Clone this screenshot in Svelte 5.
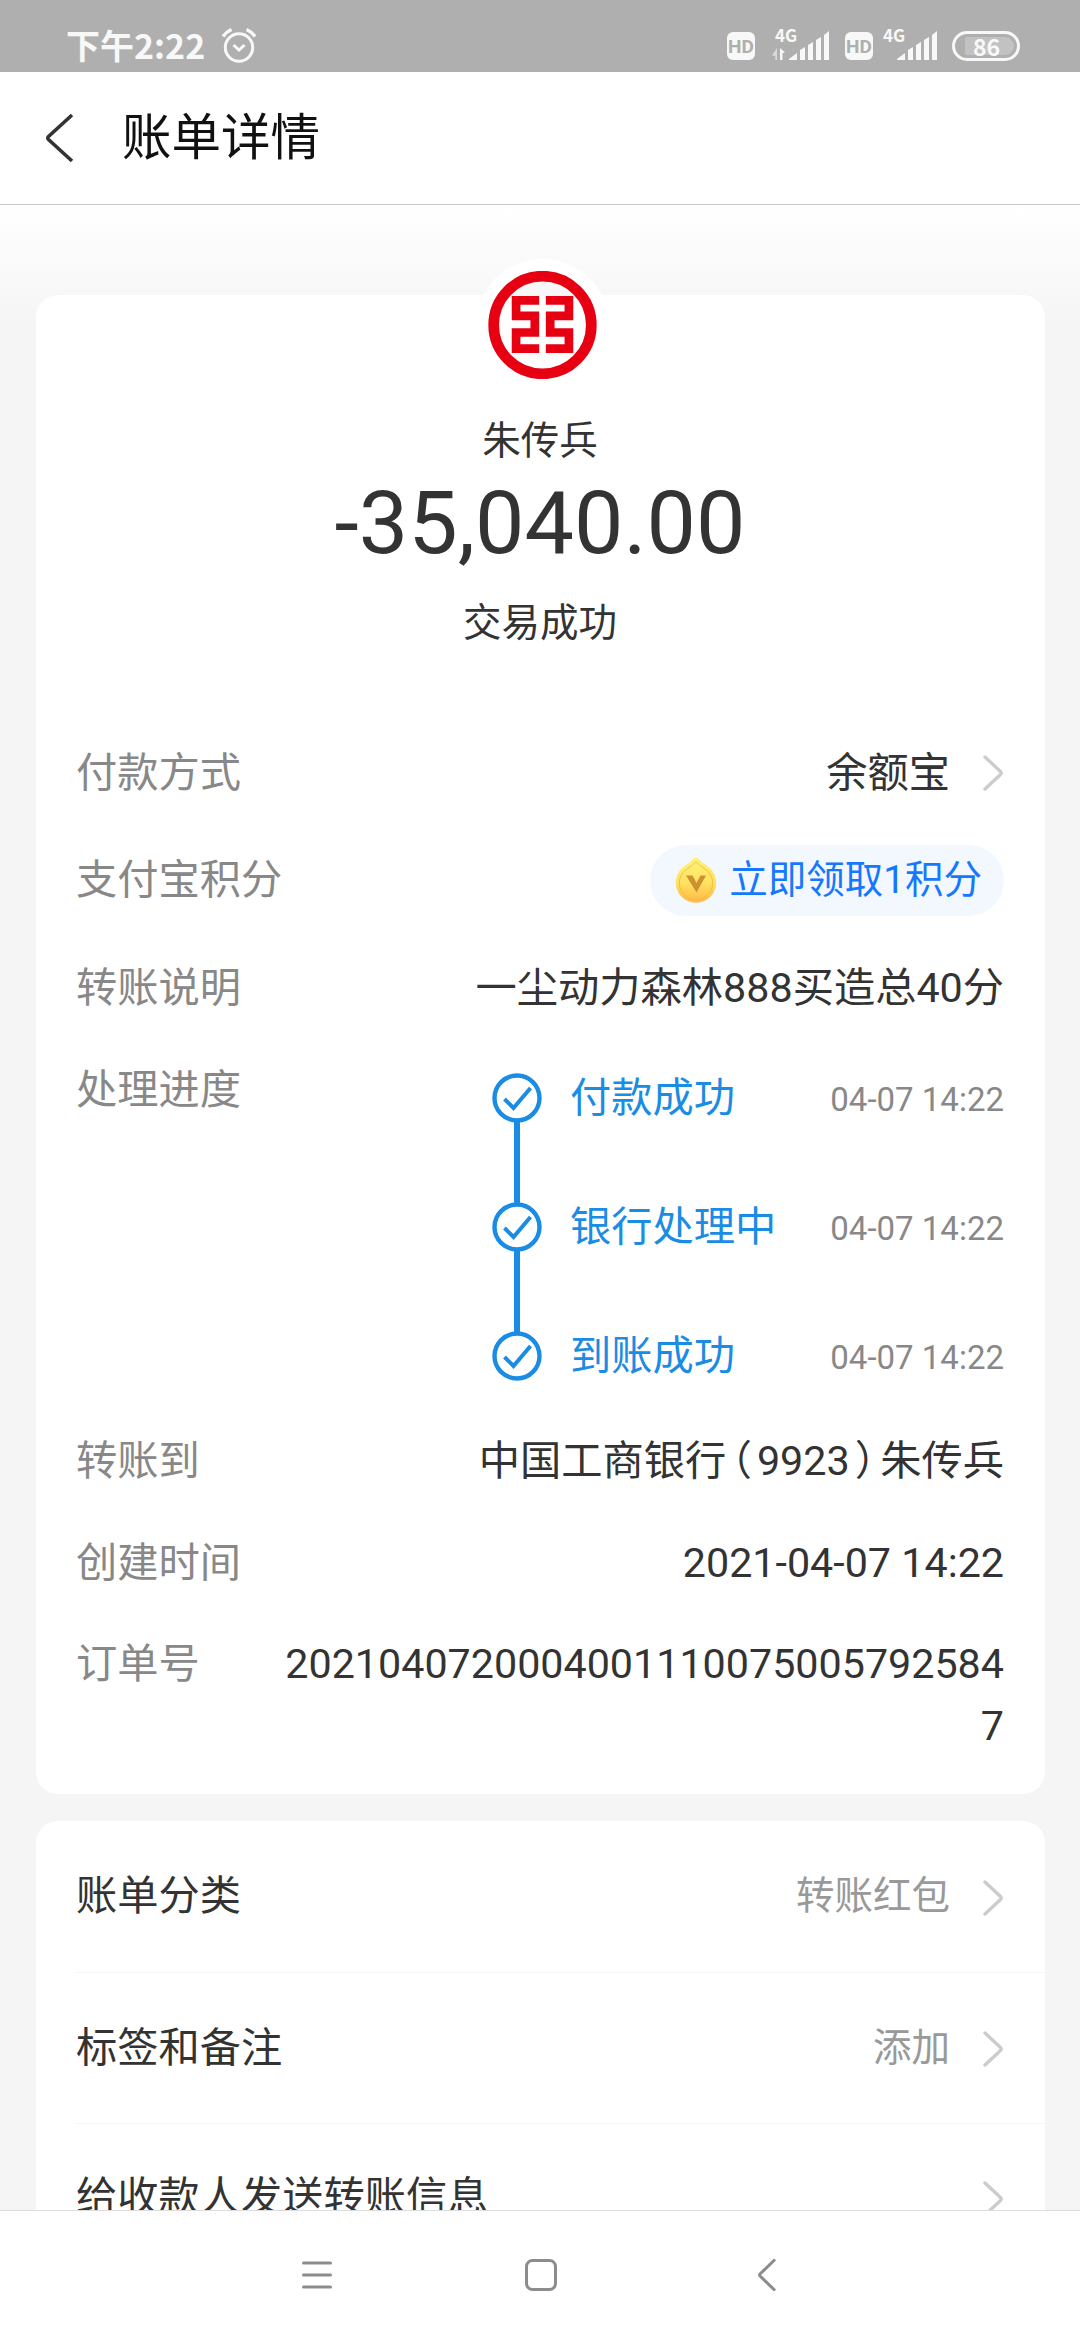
<script lang="ts">
  const steps = [
    { label: '付款成功', time: '04-07 14:22' },
    { label: '银行处理中', time: '04-07 14:22' },
    { label: '到账成功', time: '04-07 14:22' }
  ];

  const options = [
    { label: '账单分类', value: '转账红包' },
    { label: '标签和备注', value: '添加' },
    { label: '给收款人发送转账信息', value: '' }
  ];

  // signal bars, left to right
  const bars = [
    { x: 0, d: 'M0 29v-1l8-6v7z' },
    { x: 11, d: 'M0 29v-10l5-3v13z' },
    { x: 19, d: 'M0 29v-15l5-3v18z' },
    { x: 27, d: 'M0 29v-20l5-3v23z' },
    { x: 35, d: 'M0 29v-25l5-4v29z' }
  ];
</script>

{#snippet arrow()}
  <svg class="arrow" width="22" height="38" viewBox="0 0 22 38" fill="none" stroke="#ccc" stroke-width="3.4" stroke-linecap="round" stroke-linejoin="round">
    <path d="M3 3l15.5 14.6q1.4 1.4 0 2.8L3 35"></path>
  </svg>
{/snippet}

{#snippet signal(data: boolean)}
  <div class="signal">
    <span class="net">4G</span>
    <svg width="58" height="30" viewBox="0 0 58 30" fill="#f8f8f8">
      {#if data}
        <path d="M5 17v12H3.4v-4L0 24.5z" opacity=".6"></path>
        <path d="M8 17l5 4.500-2.500.5v7H8z"></path>
      {/if}
      {#each bars as bar}
        <path d={bar.d} transform="translate({bar.x + 17} 0)"></path>
      {/each}
    </svg>
  </div>
{/snippet}

<div class="screen">
  <div class="status-bar">
    <span class="clock">下午2:22</span>
    <svg class="alarm" width="36" height="36" viewBox="0 0 36 36" fill="none" stroke="#f8f8f8" stroke-width="3">
      <circle cx="18" cy="19.5" r="13.7"></circle>
      <path d="M2 8.5Q5 4 10.500 1.500M34 8.500Q31 4 25.500 1.500" stroke-width="3.400"></path>
      <path d="M12.500 17l5.500 5 5.500-5"></path>
    </svg>
    <div class="status-right">
      <span class="hd">HD</span>
      {@render signal(true)}
      <span class="hd second">HD</span>
      {@render signal(false)}
      <span class="battery"><span>86</span></span>
    </div>
  </div>

  <header class="header">
    <svg width="30" height="50" viewBox="0 0 30 50" fill="none" stroke="#333" stroke-width="3.6">
      <path d="M28 2L4.500 23.500q-1.500 1.500 0 3L28 48"></path>
    </svg>
    <h1>账单详情</h1>
  </header>

  <main class="content">
    <section class="card detail">
      <div class="logo">
        <svg width="109" height="108" viewBox="0 0 326 323" fill="none" stroke="#e60012">
          <circle cx="163" cy="161.500" r="146" stroke-width="32"></circle>
          <path stroke-width="26" d="M153 88H84v46h56v50H84v48h69M173 88h69v46h-56v50h56v48h-69"></path>
        </svg>
      </div>

      <div class="payee">朱传兵</div>
      <div class="amount">-35,040.00</div>
      <div class="state">交易成功</div>

      <div class="row tall first">
        <span class="label">付款方式</span>
        <span class="value">余额宝</span>
        {@render arrow()}
      </div>
      <div class="row tall">
        <span class="label">支付宝积分</span>
        <button class="points">
          <svg width="42" height="46" viewBox="0 0 42 46">
            <defs>
              <linearGradient id="coin" x1="0" y1="0" x2="0" y2="1">
                <stop offset="0" stop-color="#fff27a"></stop>
                <stop offset=".55" stop-color="#ffe260"></stop>
                <stop offset="1" stop-color="#fdb945"></stop>
              </linearGradient>
            </defs>
            <path d="M21 .5q2 0 3.500 2 2.500 3.500 8 6.500A20.200 20.200 0 1 1 9.500 9q5.500-3 8-6.500Q19 .5 21 .5z" fill="url(#coin)"></path>
            <path d="M21 4.500q3.500 4.500 9 7.500A16.700 16.700 0 1 1 12 12q5.500-3 9-7.500z" fill="none" stroke="#efb83c" stroke-width=".8"></path>
            <path d="M11 18.500h6.500l4 7.500 4-7.500H31L21.500 35.500z" fill="#cc9230"></path>
          </svg>
          立即领取1积分
        </button>
      </div>
      <div class="row tall">
        <span class="label">转账说明</span>
        <span class="value">一尘动力森林888买造总40分</span>
      </div>

      <div class="row progress">
        <span class="label">处理进度</span>
        <ol class="steps">
          {#each steps as step}
            <li>
              <svg width="50" height="50" viewBox="0 0 50 50" fill="none" stroke="#1b8ce3" stroke-width="4.4">
                <circle cx="25" cy="25" r="22.5"></circle>
                <path d="M12.500 26l9 9L38.500 15" stroke-width="4"></path>
              </svg>
              <span class="step-label">{step.label}</span>
              <time>{step.time}</time>
            </li>
          {/each}
        </ol>
      </div>

      <div class="row">
        <span class="label">转账到</span>
        <span class="value">中国工商银行<span class="paren">（</span>9923<span class="paren">）</span>朱传兵</span>
      </div>
      <div class="row">
        <span class="label">创建时间</span>
        <span class="value">2021-04-07 14:22</span>
      </div>
      <div class="row">
        <span class="label">订单号</span>
        <span class="value order">20210407200040011100750057925847</span>
      </div>
    </section>

    <section class="card options">
      {#each options as option}
        <div class="option">
          <span>{option.label}</span>
          <span class="option-value">{option.value}</span>
          {@render arrow()}
        </div>
      {/each}
    </section>
  </main>

  <nav class="nav">
    <svg width="32" height="34" viewBox="0 0 32 34" stroke="#8c8c8c" stroke-width="3" stroke-linecap="round">
      <path d="M2.500 5h27M2.500 17h27M2.500 29h27"></path>
    </svg>
    <svg width="34" height="34" viewBox="0 0 34 34" fill="none" stroke="#8c8c8c" stroke-width="3">
      <rect x="2.5" y="2.5" width="29" height="29" rx="6"></rect>
    </svg>
    <svg width="20" height="34" viewBox="0 0 20 34" fill="none" stroke="#8c8c8c" stroke-width="3">
      <path d="M18 1.500L3 16q-1 1 0 2l15 14.500"></path>
    </svg>
  </nav>
</div>

<style>
  :global(body) {
    margin: 0;
    background: #f5f5f5;
  }

  .screen {
    display: flex;
    flex-direction: column;
    width: 1080px;
    height: 2340px;
    overflow: hidden;
    font-family: Roboto, 'Noto Sans CJK SC', sans-serif;
    font-size: 41.25px;
    line-height: 62px;
    color: #333;
    background: #f5f5f5;
  }

  svg {
    display: block;
    flex: none;
  }

  .status-bar {
    flex: none;
    display: flex;
    box-sizing: border-box;
    height: 72px;
    padding: 0 60px 0 66px;
    color: #f8f8f8;
    background: #afafaf;
  }

  .clock {
    width: 155px;
    margin-top: 22px;
    font: 700 34px/46px 'Noto Sans CJK SC', sans-serif;
    white-space: nowrap;
  }

  .alarm {
    margin-top: 28px;
  }

  .status-right {
    display: flex;
    align-items: flex-start;
    margin-left: auto;
    padding-top: 31px;
  }

  .hd {
    width: 28px;
    height: 28px;
    margin-top: 1px;
    border-radius: 6px;
    background: #f8f8f8;
    color: #afafaf;
    font: 700 19px/29px Roboto, sans-serif;
    text-align: center;
  }

  .hd.second {
    margin-left: 15px;
  }

  .signal {
    position: relative;
    margin-left: 17px;
  }

  .second + .signal {
    margin-left: 7px;
  }

  .net {
    position: absolute;
    left: 3px;
    top: -6px;
    font: 700 17px/20px 'Noto Sans CJK SC', sans-serif;
  }

  .battery {
    box-sizing: border-box;
    width: 68px;
    height: 30px;
    margin-left: 14px;
    padding: 3px 4px 3px 10px;
    border: 3px solid #f8f8f8;
    border-radius: 15px;
  }

  .battery span {
    display: block;
    width: 49px;
    height: 18px;
    border-radius: 2px 9px 9px 2px;
    background: #c2c2c2;
    font: 700 23px/18px 'Noto Sans CJK SC', sans-serif;
    text-align: center;
    text-indent: -6px;
  }

  .header {
    flex: none;
    display: flex;
    align-items: center;
    height: 132px;
    padding-left: 44px;
    border-bottom: 1px solid #c8c8c8;
    background: #fff;
  }

  h1 {
    margin: 0 0 0 48px;
    font-size: 49.5px;
    font-weight: 400;
    color: #111;
  }

  .content {
    flex: 1;
    min-height: 0;
    overflow: hidden;
    padding: 90px 35px 0 36px;
    background: linear-gradient(#fff, #f5f5f5 120px);
  }

  .card {
    border-radius: 22px;
    background: #fff;
  }

  .detail {
    position: relative;
    box-sizing: border-box;
    height: 1498.5px;
    padding: 117px 41px 0 40px;
  }

  .logo {
    position: absolute;
    top: -36px;
    left: 50%;
    margin-left: -65px;
    border: 12px solid #fff;
    border-radius: 50%;
    background: linear-gradient(#f7f7f7 25px, #fff 25px);
  }

  .payee,
  .state {
    font-size: 38.5px;
    line-height: 58px;
    text-align: center;
  }

  .amount {
    font-size: 88px;
    line-height: 106px;
    text-align: center;
  }

  .state {
    margin-top: 18px;
  }

  .row {
    display: flex;
    padding: 20px 0 19.5px;
  }

  .row.tall {
    align-items: center;
    height: 107.6px;
    padding: 0;
  }

  .row.first {
    margin-top: 67px;
  }

  .label {
    flex: none;
    color: #888;
  }

  .value {
    margin-left: auto;
    text-align: right;
  }

  .arrow {
    margin-left: 32px;
  }

  .points {
    display: flex;
    align-items: center;
    height: 71px;
    margin-left: auto;
    padding: 0 22px 0 25px;
    border: 0;
    border-radius: 36px;
    background: #f3f8fe;
    color: #1677ff;
    font: inherit;
    font-size: 38.5px;
    gap: 12px;
  }

  .row.progress {
    box-sizing: border-box;
    height: 368.5px;
    padding: 17px 0 0;
  }

  .steps {
    display: flex;
    flex-direction: column;
    gap: 79.2px;
    margin: 14px 0 0 auto;
    padding: 0;
    list-style: none;
  }

  .steps li {
    position: relative;
    display: flex;
    align-items: center;
    width: 512px;
    height: 50px;
  }

  /* connector up to the previous step */
  .steps li + li::before {
    content: '';
    position: absolute;
    left: 22px;
    bottom: 48px;
    width: 6px;
    height: 83px;
    background: #1b8ce3;
  }

  .step-label {
    margin-left: 28px;
    color: #1b8ce3;
  }

  time {
    margin: 4px 0 0 auto;
    font-size: 33px;
    color: #888;
  }

  .paren {
    margin: 0 5px;
    font-feature-settings: 'halt';
  }

  .order {
    width: 725px;
    word-break: break-all;
  }

  .options {
    margin-top: 27.5px;
  }

  .option {
    display: flex;
    align-items: center;
    height: 150.5px;
    margin-left: 40px;
    padding-right: 41px;
    border-bottom: 1px solid #f5f5f5;
  }

  .option:last-child {
    height: 146px;
  }

  .option .arrow {
    margin-top: 3px;
  }

  .option-value {
    margin-left: auto;
    font-size: 38.5px;
    color: #999;
  }

  .nav {
    flex: none;
    display: flex;
    align-items: center;
    justify-content: space-between;
    box-sizing: border-box;
    height: 130px;
    padding: 0 303px 2px 301px;
    border-top: 1px solid #ddd;
    background: #fff;
  }

  .nav svg:nth-child(2) {
    margin-right: 8px;
  }
</style>
